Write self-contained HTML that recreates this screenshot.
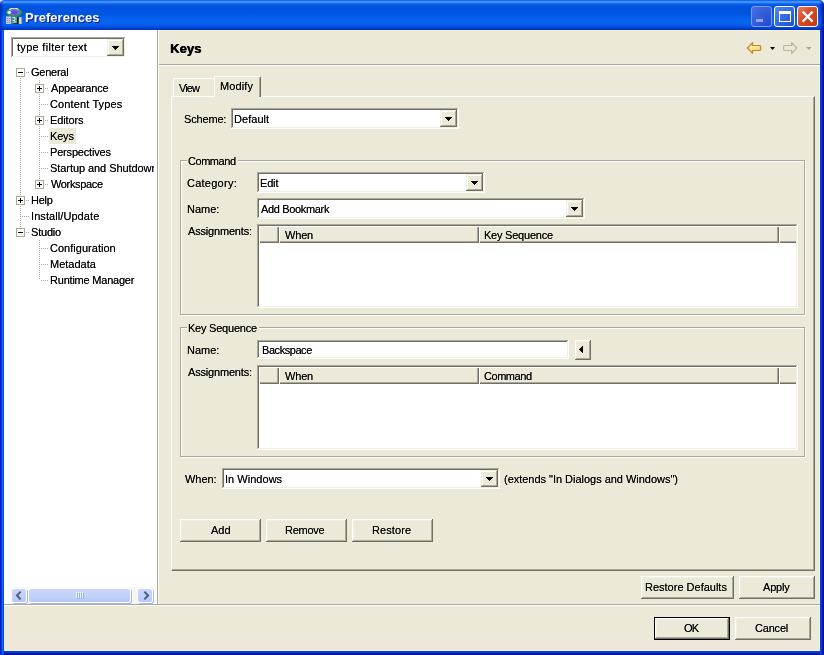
<!DOCTYPE html>
<html lang="en">
<head>
<meta charset="utf-8">
<title>Preferences</title>
<style>
html,body{margin:0;padding:0;}
body{width:824px;height:655px;overflow:hidden;background:#ece9d8;font-family:"Liberation Sans","DejaVu Sans",sans-serif;font-size:11px;color:#000;}
#win{position:absolute;left:0;top:0;width:824px;height:655px;background:#ece9d8;overflow:hidden;}
.abs{position:absolute;}
.t{position:absolute;text-shadow:0 0 0 rgba(0,0,0,.75);will-change:transform;white-space:nowrap;font:11px/13px "Liberation Sans",sans-serif;height:13px;}
.tb13{position:absolute;text-shadow:0.5px 0 0 #000,0 0 0 rgba(0,0,0,.6);will-change:transform;white-space:nowrap;font:bold 13px/16px "Liberation Sans",sans-serif;height:16px;}
/* title bar */
#title{position:absolute;left:0;top:0;width:824px;height:30px;border-radius:5px 5px 0 0;
background:linear-gradient(to bottom,#0054e3 0px,#3c8ffd 1.5px,#3c8ffd 2.5px,#0a5eec 4px,#0052dc 7px,#0055e1 14px,#0560ee 18px,#0866f2 23px,#0458e6 26px,#0042d0 28px,#0030c0 30px);}
.cap{position:absolute;will-change:transform;white-space:nowrap;font:bold 13px/16px "Liberation Sans",sans-serif;height:16px;color:#fff;text-shadow:1px 1px 0 #0a1883;}
.tb{position:absolute;top:6px;width:21px;height:21px;box-sizing:border-box;border:1px solid #fff;border-radius:3px;}
#bl{position:absolute;left:0;top:30px;width:4px;height:625px;background:linear-gradient(to right,#0019cf 0,#0019cf 1px,#0a3bdc 1px,#0a3bdc 2px,#1565ea 2px,#1565ea 3px,#004fdc 3px);}
#br{position:absolute;left:820px;top:30px;width:4px;height:625px;background:linear-gradient(to right,#0040ec 0,#0040ec 1px,#0036de 1px,#0036de 2px,#001eb6 2px,#001eb6 3px,#00108e 3px);}
#bb{position:absolute;left:0;top:651px;width:824px;height:4px;background:linear-gradient(to bottom,#0040ec 0,#0040ec 1px,#0036de 1px,#0036de 2px,#001eb6 2px,#001eb6 3px,#00108e 3px);}
/* 3d */
.sunken{box-shadow:inset -1px -1px 0 #fff,inset 1px 1px 0 #aca899,inset -2px -2px 0 #f1efe2,inset 2px 2px 0 #716f64;background:#fff;}
.raised{box-shadow:inset -1px -1px 0 #716f64,inset 1px 1px 0 #fff,inset -2px -2px 0 #aca899,inset 2px 2px 0 #f1efe2;background:#ece9d8;}
.cbtn{width:17px;height:17px;background:#ece9d8;box-shadow:inset -1px -1px 0 #716f64,inset 1px 1px 0 #f1efe2,inset -2px -2px 0 #aca899,inset 2px 2px 0 #fff;}
.btn{position:absolute;box-sizing:border-box;text-align:center;line-height:22px;height:23px;}
.arrow{position:absolute;width:0;height:0;border-left:4px solid transparent;border-right:4px solid transparent;border-top:4px solid #000;}
.grp{position:absolute;box-sizing:border-box;border:1px solid #aca899;box-shadow:inset 1px 1px 0 #fff,1px 1px 0 #fff;}
.grp .lbl{position:absolute;left:6px;top:-8px;background:#ece9d8;padding:0 2px;line-height:13px;}
/* tree */
.ti{position:absolute;white-space:nowrap;line-height:16px;height:16px;}
.box{position:absolute;width:9px;height:9px;box-sizing:border-box;border:1px solid #aca899;background:#fff;}
.box:before{content:"";position:absolute;left:1px;top:3px;width:5px;height:1px;background:#000;}
.box.plus:after{content:"";position:absolute;left:3px;top:1px;width:1px;height:5px;background:#000;}
.hd{position:absolute;height:1px;background-image:linear-gradient(to right,#aca899 50%,transparent 50%);background-size:2px 1px;}
.vd{position:absolute;width:1px;background-image:linear-gradient(to bottom,#aca899 50%,transparent 50%);background-size:1px 2px;}
.sb{position:absolute;top:588px;height:15px;box-sizing:border-box;border:1px solid #fff;border-radius:3px;background:linear-gradient(to bottom,#c8d6fb 0,#c2d0fa 60%,#b6c8f6 100%);box-shadow:1px 1px 0 #a3b9f0;}
.hdr{position:absolute;box-sizing:border-box;height:17px;background:#ece9d8;box-shadow:inset 1px 1px 0 #fff,inset -1px -1px 0 #716f64,inset -2px -2px 0 #aca899;line-height:17px;}
</style>
</head>
<body>
<div id="win">
  <!-- title bar -->
  <div id="title">
    <div class="abs" style="left:0;top:0;width:4px;height:30px;border-radius:5px 0 0 0;background:linear-gradient(to right,rgba(0,20,170,.75),rgba(0,40,200,.35) 50%,rgba(0,60,220,0));"></div>
    <div class="abs" style="left:819px;top:0;width:5px;height:30px;border-radius:0 5px 0 0;background:linear-gradient(to left,rgba(0,10,130,.85),rgba(0,30,180,.5) 50%,rgba(0,60,220,0));"></div>
    <svg class="abs" style="left:6px;top:8px" width="16" height="16" viewBox="0 0 16 16">
      <ellipse cx="8" cy="4.3" rx="7.3" ry="3.8" fill="#7a6ee2" stroke="#1fa11f" stroke-width="1.4"/>
      <ellipse cx="7.8" cy="4.6" rx="3.8" ry="2" fill="#5a4fe0"/>
      <ellipse cx="3.3" cy="4.5" rx="1.9" ry="1.4" fill="#f6e6f2"/>
      <path d="M3.2 1.6 Q8 -1.2 12.6 1.5" stroke="#f2dcd8" stroke-width="1.3" fill="none"/>
      <rect x="0" y="8.4" width="5.2" height="7.6" fill="#c9c5eb"/>
      <path d="M1 10.5h1.2M3 10.5h1.2M1 12.5h1.2M3 12.5h1.2M1 14.5h1.2M3 14.5h1.2" stroke="#8f88c4" stroke-width="1"/>
      <rect x="5.6" y="8.4" width="5.6" height="7.6" fill="#3d9484"/>
      <path d="M6.6 9.5h2.4M8.4 11h2M6.6 12.5h2.4M8.4 14h2M6.6 15h1.6" stroke="#f2fbf8" stroke-width="1"/>
      <rect x="6.6" y="15.3" width="4.4" height="0.7" fill="#111"/>
      <rect x="11.2" y="9" width="1.5" height="7" fill="#0a0a0a"/>
      <rect x="12.7" y="9" width="3.3" height="7" fill="#c6beb2"/>
      <rect x="13.5" y="10.6" width="1.5" height="4.6" fill="#b6f2f2"/>
      <rect x="15.4" y="9" width="0.6" height="7" fill="#a08662"/>
    </svg>
    <div class="tb" style="left:751px;background:linear-gradient(135deg,#4470e4,#2349cd);border-color:#7f9ceb;"><div class="abs" style="left:4px;top:12px;width:7px;height:3px;background:#8fa5e8"></div></div>
    <div class="tb" style="left:774px;background:linear-gradient(135deg,#4f86f2,#1c4fd8);"><div class="abs" style="left:4px;top:4px;width:12px;height:11px;box-sizing:border-box;border:1px solid #fff;border-top-width:3px"></div></div>
    <div class="tb" style="left:797px;background:linear-gradient(135deg,#e6795a,#d94c26 45%,#c2350e);">
      <svg class="abs" style="left:3px;top:3px" width="13" height="13" viewBox="0 0 13 13"><path d="M1.6 1.6 L11.6 11.6 M11.6 1.6 L1.6 11.6" stroke="#fff" stroke-width="2.2" fill="none"/></svg>
    </div>
  </div>
  <div id="bb"></div><div id="bl"></div><div id="br"></div>
  <div class="abs" style="left:159px;top:30px;width:661px;height:1px;background:#f8f1d9;"></div>
  <div class="abs" style="left:819px;top:30px;width:1px;height:621px;background:#fbf2d6;"></div>
  <div class="abs" style="left:4px;top:650px;width:816px;height:1px;background:#fbf2d6;"></div>

  <!-- left panel -->
  <div class="abs" style="left:4px;top:30px;width:153px;height:574px;background:#fff;"></div>
  <div class="abs" style="left:157px;top:30px;width:1px;height:575px;background:#aca899;"></div>
  <div class="abs" style="left:158px;top:30px;width:1px;height:575px;background:#fff;"></div>
  <!-- filter combo -->
  <div class="abs sunken" style="left:11px;top:37px;width:115px;height:21px;"></div>
  <div class="abs cbtn" style="left:107px;top:39px;"><svg class="abs" style="left:5px;top:7px" width="7" height="4" viewBox="0 0 7 4" shape-rendering="crispEdges"><path d="M0 0h7v1h-1v1h-1v1h-1v1h-1v-1h-1v-1h-1v-1h-1z" fill="#000"/></svg></div>

  <!-- tree -->
  <div id="tree">
    <div class="vd" style="left:20px;top:78px;height:150px;"></div>
    <div class="vd" style="left:39px;top:80px;height:104px;"></div>
    <div class="vd" style="left:39px;top:240px;height:40px;"></div>
    <div class="hd" style="left:26px;top:72px;width:4px;"></div>
    <div class="hd" style="left:45px;top:88px;width:4px;"></div>
    <div class="hd" style="left:41px;top:104px;width:7px;"></div>
    <div class="hd" style="left:45px;top:120px;width:4px;"></div>
    <div class="hd" style="left:41px;top:136px;width:7px;"></div>
    <div class="hd" style="left:41px;top:152px;width:7px;"></div>
    <div class="hd" style="left:41px;top:168px;width:7px;"></div>
    <div class="hd" style="left:45px;top:184px;width:4px;"></div>
    <div class="hd" style="left:26px;top:200px;width:4px;"></div>
    <div class="hd" style="left:22px;top:216px;width:7px;"></div>
    <div class="hd" style="left:26px;top:232px;width:4px;"></div>
    <div class="hd" style="left:41px;top:248px;width:7px;"></div>
    <div class="hd" style="left:41px;top:264px;width:7px;"></div>
    <div class="hd" style="left:41px;top:280px;width:7px;"></div>
    <div class="box" style="left:16px;top:68px;"></div>
    <div class="box plus" style="left:35px;top:84px;"></div>
    <div class="box plus" style="left:35px;top:116px;"></div>
    <div class="box plus" style="left:35px;top:180px;"></div>
    <div class="box plus" style="left:16px;top:196px;"></div>
    <div class="box" style="left:16px;top:228px;"></div>
    <div class="abs" style="left:49px;top:128px;width:27px;height:16px;background:#ece9d8;"></div>
  </div>

  <!-- h scrollbar -->
  <div class="abs" style="left:11px;top:587px;width:143px;height:17px;background:#f7f6f1;"></div>
  <div class="sb" style="left:11px;width:16px;">
    <svg class="abs" style="left:2px;top:1px" width="10" height="11" viewBox="0 0 10 11"><path d="M6.6 1.6 L3 5.5 L6.6 9.4" stroke="#4d6185" stroke-width="2.1" fill="none"/></svg>
  </div>
  <div class="sb" style="left:28px;width:103px;">
    <div class="abs" style="left:47px;top:3px;width:1px;height:6px;background:#eef4fe;box-shadow:2px 0 0 #eef4fe,4px 0 0 #eef4fe,6px 0 0 #eef4fe,1px 1px 0 #8cb0f8,3px 1px 0 #8cb0f8,5px 1px 0 #8cb0f8,7px 1px 0 #8cb0f8;"></div>
  </div>
  <div class="sb" style="left:137px;width:16px;">
    <svg class="abs" style="left:3px;top:1px" width="10" height="11" viewBox="0 0 10 11"><path d="M3.4 1.6 L7 5.5 L3.4 9.4" stroke="#4d6185" stroke-width="2.1" fill="none"/></svg>
  </div>

  <!-- separators -->
  <div class="abs" style="left:4px;top:604px;width:816px;height:1px;background:#aca899;"></div>
  <div class="abs" style="left:4px;top:605px;width:816px;height:1px;background:#fff;"></div>
  <div class="abs" style="left:159px;top:64px;width:661px;height:1px;background:#aca899;"></div>
  <div class="abs" style="left:159px;top:65px;width:661px;height:1px;background:#fff;"></div>

  <!-- header -->
  <svg class="abs" style="left:745px;top:40px" width="70" height="16" viewBox="0 0 70 16">
    <defs><linearGradient id="ag" x1="0" y1="0" x2="0.6" y2="1"><stop offset="0" stop-color="#fffbe6"/><stop offset="0.55" stop-color="#fde6a0"/><stop offset="1" stop-color="#f6c862"/></linearGradient></defs>
    <path d="M2.5 8 L7.6 2.6 L7.6 5.5 L14.4 5.5 Q15.7 5.5 15.7 6.8 L15.7 9.2 Q15.7 10.5 14.4 10.5 L7.6 10.5 L7.6 13.4 Z" fill="url(#ag)" stroke="#c58a1c" stroke-width="1.2" stroke-linejoin="round"/>
    <path d="M25 7 L30 7 L27.5 10 Z" fill="#000"/>
    <path d="M51.800 8 L46.700 2.600 L46.700 5.500 L39.900 5.500 Q38.600 5.500 38.600 6.800 L38.600 9.200 Q38.600 10.500 39.900 10.500 L46.700 10.500 L46.700 13.400 Z" fill="#ece9d8" stroke="#b8b5a6" stroke-width="1.2" stroke-linejoin="round"/>
    <path d="M61 7 L67 7 L64 10 Z" fill="#aca899"/>
    <path d="M65 10 L68 7" stroke="#fff" stroke-width="1" fill="none"/>
  </svg>

  <!-- tab folder -->
  <div class="abs" style="left:171px;top:96px;width:644px;height:475px;box-sizing:border-box;border-top:1px solid #fff;border-left:1px solid #fff;border-right:1px solid #716f64;border-bottom:1px solid #716f64;box-shadow:inset -1px -1px 0 #aca899;"></div>
  <!-- View tab -->
  <div class="abs" style="left:173px;top:78px;width:41px;height:18px;box-sizing:border-box;border-top:1px solid #fff;border-left:1px solid #fff;border-radius:2px 2px 0 0;"></div>
  <!-- Modify tab -->
  <div class="abs" style="left:214px;top:76px;width:47px;height:21px;box-sizing:border-box;background:#ece9d8;border-top:1px solid #fff;border-left:1px solid #fff;border-right:1px solid #716f64;border-radius:2px 2px 0 0;box-shadow:inset -1px 0 0 #aca899;"></div>

  <!-- Scheme -->
  <div class="abs sunken" style="left:231px;top:108px;width:228px;height:21px;"></div>
  <div class="abs cbtn" style="left:440px;top:110px;"><svg class="abs" style="left:5px;top:7px" width="7" height="4" viewBox="0 0 7 4" shape-rendering="crispEdges"><path d="M0 0h7v1h-1v1h-1v1h-1v1h-1v-1h-1v-1h-1v-1h-1z" fill="#000"/></svg></div>

  <!-- Command group -->
  <div class="grp" style="left:180px;top:160px;width:625px;height:155px;"><span class="lbl" style="width:47px;height:13px"></span></div>
  <div class="abs sunken" style="left:257px;top:172px;width:228px;height:21px;"></div>
  <div class="abs cbtn" style="left:466px;top:174px;"><svg class="abs" style="left:5px;top:7px" width="7" height="4" viewBox="0 0 7 4" shape-rendering="crispEdges"><path d="M0 0h7v1h-1v1h-1v1h-1v1h-1v-1h-1v-1h-1v-1h-1z" fill="#000"/></svg></div>
  <div class="abs sunken" style="left:257px;top:198px;width:328px;height:21px;"></div>
  <div class="abs cbtn" style="left:566px;top:200px;"><svg class="abs" style="left:5px;top:7px" width="7" height="4" viewBox="0 0 7 4" shape-rendering="crispEdges"><path d="M0 0h7v1h-1v1h-1v1h-1v1h-1v-1h-1v-1h-1v-1h-1z" fill="#000"/></svg></div>
  <div class="abs sunken" style="left:257px;top:224px;width:541px;height:84px;"></div>
  <div class="hdr" style="left:259px;top:226px;width:20px;"></div>
  <div class="hdr" style="left:279px;top:226px;width:200px;padding-left:6px;"></div>
  <div class="hdr" style="left:479px;top:226px;width:300px;padding-left:6px;"></div>
  <div class="hdr" style="left:779px;top:226px;width:17px;box-shadow:inset 1px 1px 0 #fff,inset 0 -1px 0 #716f64,inset 0 -2px 0 #aca899;"></div>

  <!-- Key Sequence group -->
  <div class="grp" style="left:180px;top:327px;width:625px;height:130px;"><span class="lbl" style="width:68px;height:13px"></span></div>
  <div class="abs sunken" style="left:257px;top:340px;width:312px;height:19px;"></div>
  <div class="abs raised" style="left:575px;top:340px;width:16px;height:20px;"><svg class="abs" style="left:4px;top:6px" width="4" height="7" viewBox="0 0 4 7" shape-rendering="crispEdges"><path d="M4 0v7h-1v-1h-1v-1h-1v-1h-1v-1h1v-1h1v-1h1v-1z" fill="#000"/></svg></div>
  <div class="abs sunken" style="left:257px;top:365px;width:541px;height:85px;"></div>
  <div class="hdr" style="left:259px;top:367px;width:20px;"></div>
  <div class="hdr" style="left:279px;top:367px;width:200px;padding-left:6px;"></div>
  <div class="hdr" style="left:479px;top:367px;width:300px;padding-left:6px;"></div>
  <div class="hdr" style="left:779px;top:367px;width:17px;box-shadow:inset 1px 1px 0 #fff,inset 0 -1px 0 #716f64,inset 0 -2px 0 #aca899;"></div>

  <!-- When -->
  <div class="abs sunken" style="left:222px;top:468px;width:278px;height:21px;"></div>
  <div class="abs cbtn" style="left:481px;top:470px;"><svg class="abs" style="left:5px;top:7px" width="7" height="4" viewBox="0 0 7 4" shape-rendering="crispEdges"><path d="M0 0h7v1h-1v1h-1v1h-1v1h-1v-1h-1v-1h-1v-1h-1z" fill="#000"/></svg></div>

  <!-- buttons -->
  <div class="btn raised" style="left:180px;top:519px;width:81px;"></div>
  <div class="btn raised" style="left:266px;top:519px;width:81px;"></div>
  <div class="btn raised" style="left:352px;top:519px;width:81px;"></div>
  <div class="btn raised" style="left:641px;top:576px;width:93px;"></div>
  <div class="btn raised" style="left:739px;top:576px;width:76px;"></div>
  <div class="btn" style="left:654px;top:617px;width:76px;background:#000;"></div>
  <div class="btn raised" style="left:655px;top:618px;width:74px;height:21px;line-height:20px;"></div>
  <div class="btn raised" style="left:735px;top:617px;width:76px;"></div>
  <div class="cap" style="left:24.60px;top:10px;letter-spacing:0.015px;">Preferences</div>
  <div class="t" style="left:16.50px;top:41px;letter-spacing:0.300px;">type filter text</div>
  <div class="t" style="left:30.75px;top:66px;letter-spacing:-0.250px;">General</div>
  <div class="t" style="left:50.75px;top:82px;letter-spacing:-0.194px;">Appearance</div>
  <div class="t" style="left:49.75px;top:98px;letter-spacing:0.125px;">Content Types</div>
  <div class="t" style="left:49.75px;top:114px;letter-spacing:-0.125px;">Editors</div>
  <div class="t" style="left:49.75px;top:130px;letter-spacing:-0.167px;">Keys</div>
  <div class="t" style="left:49.75px;top:146px;letter-spacing:-0.182px;">Perspectives</div>
  <div class="t" style="left:49.75px;top:162px;letter-spacing:-0.066px;width:104.00px;overflow:hidden;">Startup and Shutdown</div>
  <div class="t" style="left:50.75px;top:178px;letter-spacing:-0.344px;">Workspace</div>
  <div class="t" style="left:30.75px;top:194px;letter-spacing:-0.250px;">Help</div>
  <div class="t" style="left:30.75px;top:210px;letter-spacing:0.077px;">Install/Update</div>
  <div class="t" style="left:30.75px;top:226px;letter-spacing:-0.200px;">Studio</div>
  <div class="t" style="left:49.75px;top:242px;letter-spacing:0.021px;">Configuration</div>
  <div class="t" style="left:49.75px;top:258px;letter-spacing:0.000px;">Metadata</div>
  <div class="t" style="left:49.75px;top:274px;letter-spacing:-0.214px;">Runtime Manager</div>
  <div class="tb13" style="left:169.50px;top:41px;letter-spacing:0.083px;">Keys</div>
  <div class="t" style="left:178.75px;top:82px;letter-spacing:-0.917px;">View</div>
  <div class="t" style="left:219.50px;top:80px;letter-spacing:0.100px;">Modify</div>
  <div class="t" style="left:183.50px;top:113px;letter-spacing:-0.167px;">Scheme:</div>
  <div class="t" style="left:233.50px;top:113px;letter-spacing:0.042px;">Default</div>
  <div class="t" style="left:187.75px;top:155px;letter-spacing:-0.458px;">Command</div>
  <div class="t" style="left:186.50px;top:177px;letter-spacing:0.250px;">Category:</div>
  <div class="t" style="left:259.50px;top:177px;letter-spacing:-0.167px;">Edit</div>
  <div class="t" style="left:186.50px;top:203px;letter-spacing:0.000px;">Name:</div>
  <div class="t" style="left:260.50px;top:203px;letter-spacing:-0.341px;">Add Bookmark</div>
  <div class="t" style="left:187.50px;top:225px;letter-spacing:-0.182px;">Assignments:</div>
  <div class="t" style="left:284.50px;top:229px;letter-spacing:-0.167px;">When</div>
  <div class="t" style="left:483.50px;top:229px;letter-spacing:-0.227px;">Key Sequence</div>
  <div class="t" style="left:187.75px;top:322px;letter-spacing:-0.227px;">Key Sequence</div>
  <div class="t" style="left:186.50px;top:344px;letter-spacing:0.000px;">Name:</div>
  <div class="t" style="left:261.50px;top:344px;letter-spacing:-0.438px;">Backspace</div>
  <div class="t" style="left:187.50px;top:366px;letter-spacing:-0.182px;">Assignments:</div>
  <div class="t" style="left:284.50px;top:370px;letter-spacing:-0.167px;">When</div>
  <div class="t" style="left:483.50px;top:370px;letter-spacing:-0.458px;">Command</div>
  <div class="t" style="left:185.00px;top:473px;letter-spacing:-0.062px;">When:</div>
  <div class="t" style="left:224.50px;top:473px;letter-spacing:0.028px;">In Windows</div>
  <div class="t" style="left:503.50px;top:473px;letter-spacing:-0.023px;">(extends "In Dialogs and Windows")</div>
  <div class="t" style="left:210.50px;top:524px;letter-spacing:0.000px;">Add</div>
  <div class="t" style="left:285.25px;top:524px;letter-spacing:-0.250px;">Remove</div>
  <div class="t" style="left:371.50px;top:524px;letter-spacing:0.083px;">Restore</div>
  <div class="t" style="left:645.25px;top:581px;letter-spacing:0.000px;">Restore Defaults</div>
  <div class="t" style="left:762.50px;top:581px;letter-spacing:-0.188px;">Apply</div>
  <div class="t" style="left:684.25px;top:622px;letter-spacing:-0.750px;">OK</div>
  <div class="t" style="left:755.25px;top:622px;letter-spacing:-0.200px;">Cancel</div>
</div>
</body>
</html>
